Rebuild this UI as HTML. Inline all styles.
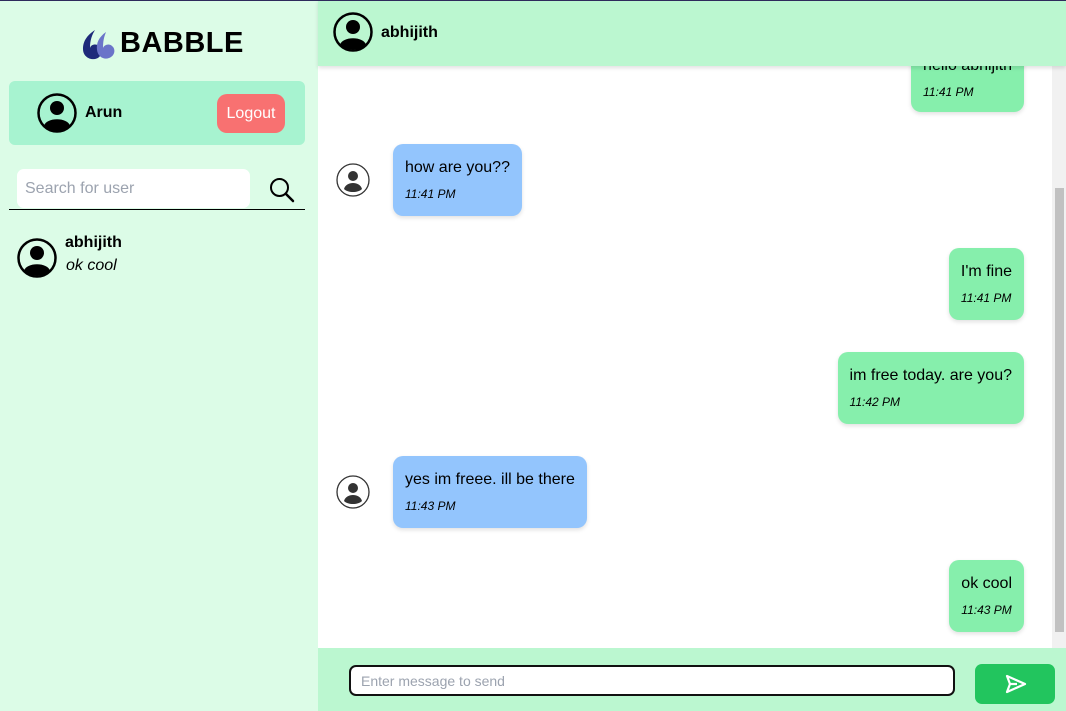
<!DOCTYPE html>
<html><head><style>
*{box-sizing:border-box;margin:0;padding:0}
body{width:1066px;height:711px;overflow:hidden;font-family:"Liberation Sans",sans-serif;position:relative;background:#fff}
.topl{position:absolute;left:0;top:0;width:1066px;height:1px;background:#2e2a5c;z-index:5}
.side{position:absolute;left:0;top:0;width:318px;height:711px;background:#dcfce7}
.logo{position:absolute;left:82px;top:27px;display:flex;align-items:center}
.logo span{font-weight:bold;font-size:29px;margin-left:4px;letter-spacing:0.5px}
.me{position:absolute;left:9px;top:81px;width:296px;height:64px;background:#a7f3d0;border-radius:6px}
.av{position:absolute}
.me .name{position:absolute;left:76px;top:23px;font-weight:bold;font-size:16px}
.logout{position:absolute;left:208px;top:13px;width:68px;height:39px;background:#f87171;color:#fff;border-radius:10px;font-size:16px;text-align:center;line-height:39px}
.search{position:absolute;left:17px;top:169px;width:233px;height:39px;background:#fff;border-radius:7px;color:#9ca3af;font-size:16px;padding:11px 8px}
.line{position:absolute;left:9px;top:209px;width:296px;height:1px;background:#000}
.cname{position:absolute;left:65px;top:234px;font-weight:bold;font-size:16px}
.clast{position:absolute;left:66px;top:257px;font-style:italic;font-size:16px}
.head{position:absolute;left:318px;top:0;width:748px;height:66px;background:#bbf7d0;box-shadow:0 2px 4px rgba(0,0,0,.12);z-index:2}
.head .n{position:absolute;left:63px;top:24px;font-weight:bold;font-size:16px}
.msgs{position:absolute;left:318px;top:66px;width:734px;height:582px;background:#fff;overflow:hidden}
.b{position:absolute;border-radius:10px;padding:15px 12px 0;font-size:16px;box-shadow:0 2px 4px rgba(0,0,0,.12);height:72px}
.b i{display:block;font-size:12px;margin-top:10px}
.s{background:#86efac;right:28px}
.r{background:#93c5fd;left:75px}
.sb{position:absolute;left:1052px;top:66px;width:14px;height:582px;background:#f1f1f1}
.thumb{position:absolute;left:3px;top:122px;width:9px;height:444px;background:#c1c1c1}
.foot{position:absolute;left:318px;top:648px;width:748px;height:63px;background:#bbf7d0}
.inp{position:absolute;left:31px;top:17px;width:606px;height:31px;border:2px solid #111;border-radius:7px;background:#fff;color:#9ca3af;font-size:14px;padding:6px 10px}
.send{position:absolute;left:657px;top:16px;width:80px;height:40px;background:#22c55e;border-radius:7px}
</style></head><body>
<div class="topl"></div>
<div class="side">
 <div class="logo"><svg width="34" height="32" viewBox="0 0 34 32"><path d="M13 2 C4 8 1 14 1 21 C1 28 7 32 13 31 C19 30 21 24 18 19 C15 15 9 16 8 20 C8 12 10 7 13 2Z" fill="#1e2a7a"/><path d="M24 4 C17 9 14 15 15 22 C16 29 22 32 27 30 C33 28 34 21 30 18 C27 15 22 17 21 20 C21 13 22 9 24 4Z" fill="#6b74c9"/></svg><span>BABBLE</span></div>
 <div class="me">
  <svg class="av" style="left:28px;top:12px" width="40" height="40" viewBox="0 0 40 40"><circle cx="20" cy="20" r="18.5" fill="none" stroke="#000" stroke-width="2.5"/><circle cx="20" cy="15" r="7" fill="#000"/><path d="M7 33 C9 24 31 24 33 33 C27 39 13 39 7 33Z" fill="#000"/></svg>
  <div class="name">Arun</div>
  <div class="logout">Logout</div>
 </div>
 <div class="search">Search for user</div>
 <svg class="av" style="left:269px;top:177px" width="26" height="26" viewBox="0 0 26 26"><circle cx="10.5" cy="10.5" r="8.5" fill="none" stroke="#000" stroke-width="2"/><path d="M17 17 L24 24" stroke="#000" stroke-width="2.5" stroke-linecap="round"/></svg>
 <div class="line"></div>
 <svg class="av" style="left:17px;top:238px" width="40" height="40" viewBox="0 0 40 40"><circle cx="20" cy="20" r="18.5" fill="none" stroke="#000" stroke-width="2.5"/><circle cx="20" cy="15" r="7" fill="#000"/><path d="M7 33 C9 24 31 24 33 33 C27 39 13 39 7 33Z" fill="#000"/></svg>
 <div class="cname">abhijith</div>
 <div class="clast">ok cool</div>
</div>
<div class="head">
 <svg class="av" style="left:15px;top:12px" width="40" height="40" viewBox="0 0 40 40"><circle cx="20" cy="20" r="18.5" fill="none" stroke="#000" stroke-width="2.5"/><circle cx="20" cy="15" r="7" fill="#000"/><path d="M7 33 C9 24 31 24 33 33 C27 39 13 39 7 33Z" fill="#000"/></svg>
 <div class="n">abhijith</div>
</div>
<div class="msgs">
 <div class="b s" style="top:-26px;padding-top:17px">hello abhijith<i>11:41 PM</i></div>
 <svg class="av" style="left:18px;top:97px" width="34" height="34" viewBox="0 0 34 34"><circle cx="17" cy="17" r="16" fill="#fff" stroke="#333" stroke-width="1.3"/><circle cx="17" cy="13" r="5" fill="#333"/><path d="M8 26 C10 18 24 18 26 26 C22 30 12 30 8 26Z" fill="#333"/></svg>
 <div class="b r" style="top:78px">how are you??<i>11:41 PM</i></div>
 <div class="b s" style="top:182px">I'm fine<i>11:41 PM</i></div>
 <div class="b s" style="top:286px">im free today. are you?<i>11:42 PM</i></div>
 <svg class="av" style="left:18px;top:409px" width="34" height="34" viewBox="0 0 34 34"><circle cx="17" cy="17" r="16" fill="#fff" stroke="#333" stroke-width="1.3"/><circle cx="17" cy="13" r="5" fill="#333"/><path d="M8 26 C10 18 24 18 26 26 C22 30 12 30 8 26Z" fill="#333"/></svg>
 <div class="b r" style="top:390px">yes im freee. ill be there<i>11:43 PM</i></div>
 <div class="b s" style="top:494px">ok cool<i>11:43 PM</i></div>
</div>
<div class="sb"><div class="thumb"></div></div>
<div class="foot">
 <div class="inp">Enter message to send</div>
 <div class="send"><svg style="position:absolute;left:30px;top:10px" width="22" height="20" viewBox="0 0 22 20"><path d="M2 2 L20 10 L2 18 L5 10 Z M5 10 L12 10" fill="none" stroke="#fff" stroke-width="2.2" stroke-linejoin="round"/></svg></div>
</div>
</body></html>
